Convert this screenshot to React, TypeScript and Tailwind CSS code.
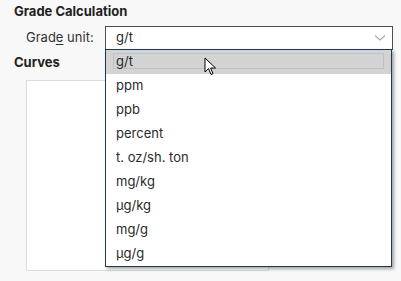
const units = ['g/t', 'ppm', 'ppb', 'percent', 't. oz/sh. ton', 'mg/kg', 'µg/kg', 'mg/g', 'µg/g']

const Cursor = () => (
  <svg width="14" height="20" viewBox="0 0 14 20" className="absolute left-[204px] top-[57px]">
    <path d="M1 1 L1 15 L4.5 11.5 L7 17.5 L9 16.6 L6.6 11 L11.5 11 Z" fill="#fff" stroke="#000" strokeWidth="1" strokeLinejoin="miter" />
  </svg>
)

export default function App() {
  return (
    <div className="relative w-[401px] h-[281px] overflow-hidden bg-[#f8f8f8] text-[13px] text-[#2a2a2a]" style={{ fontFamily: 'Inter, Roboto, sans-serif' }}>
      <div className="pl-[14px] pt-[3px] h-[22px] font-bold leading-[16px] text-[#222]">Grade Calculation</div>
      <div className="flex items-center h-[24px] mt-[4px]">
        <div className="w-[105px] pl-[26px] text-[#333]">
          Grad<span className="underline underline-offset-2">e</span> unit:
        </div>
        <div className="w-[288px] h-[24px] flex items-center justify-between bg-white border border-[#4d4d4d] pl-[10px] pr-[6px]">
          <span>g/t</span>
          <svg width="12" height="8" viewBox="0 0 12 8">
            <path d="M1 1.5 L6 6 L11 1.5" fill="none" stroke="#a8a8a8" strokeWidth="1.2" />
          </svg>
        </div>
      </div>
      <div className="pl-[14px] mt-[4px] font-bold leading-[16px] text-[#222]">Curves</div>
      <div className="ml-[26px] mt-[10px] w-[243px] h-[191px] bg-white border border-[#dcdcdc]" />

      <div className="absolute left-[105px] top-[49px] w-[287px] bg-white border border-[#1d3a55] shadow-[2px_2px_3px_rgba(0,0,0,0.35)]">
        {units.map((u, i) => (
          <div key={u} className={i === 0 ? 'h-[24px] flex items-center bg-[#d3d3d3] relative' : 'h-[24px] flex items-center'}>
            {i === 0 && <div className="absolute left-[7px] right-[7px] top-[3px] bottom-[5px] border border-[#b4c4d2]" />}
            <span className="pl-[10px] relative">{u}</span>
          </div>
        ))}
      </div>
      <Cursor />
    </div>
  )
}
